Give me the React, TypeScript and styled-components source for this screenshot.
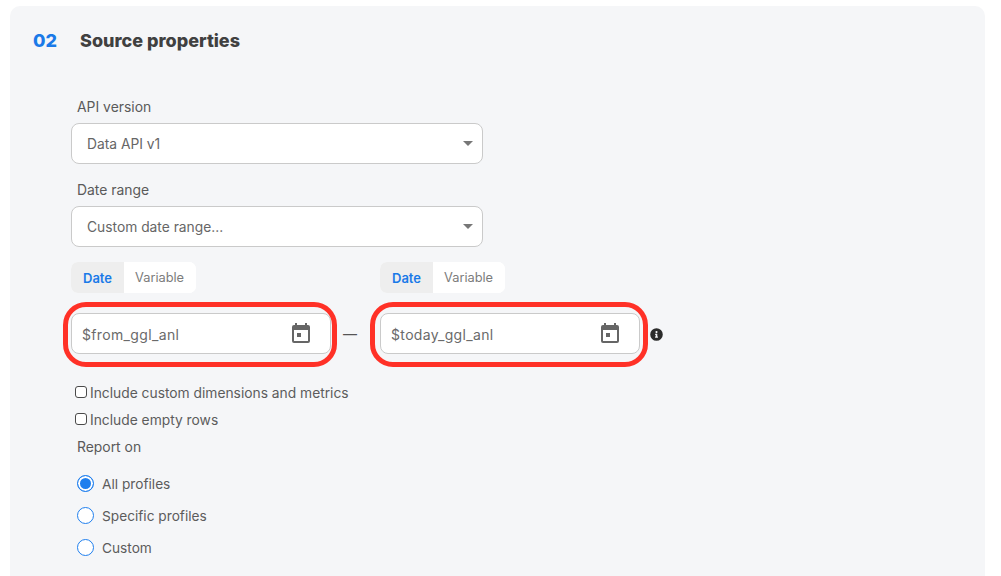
import React from 'react';
import styled, { createGlobalStyle } from 'styled-components';

const GlobalStyle = createGlobalStyle`
  html, body {
    margin: 0;
    padding: 0;
    height: 576px;
    overflow: hidden;
    background: #fff;
    font-family: Inter, "Liberation Sans", sans-serif;
  }
`;

const Panel = styled.section`
  margin: 6px 16px 0 10px;
  height: 570px;
  box-sizing: border-box;
  padding: 0 23px;
  background: #f5f6f8;
  border-radius: 10px 10px 0 0;
`;

const Header = styled.header`
  display: flex;
  align-items: center;
  height: 69px;
  font-size: 18px;
  font-weight: 800;
`;

const StepNumber = styled.span`
  width: 47px;
  color: #1a7ae8;
`;

const Title = styled.h2`
  margin: 0;
  font: inherit;
  color: #404040;
`;

const Form = styled.div`
  display: flex;
  flex-direction: column;
  align-items: flex-start;
  padding: 23px 0 0 38px;
`;

const Label = styled.label`
  display: block;
  height: 17px;
  margin: 1px 0 7px 6px;
  font-size: 13.9px;
  line-height: 17px;
  color: #5a5a5a;
`;

const Select = styled.div`
  position: relative;
  width: 412px;
  height: 41px;
  box-sizing: border-box;
  margin-bottom: 17px;
  padding-left: 15px;
  display: flex;
  align-items: center;
  background: #fff;
  border: 1px solid #cacaca;
  border-radius: 8px;
  font-size: 13.8px;
  color: #666;

  &::after {
    content: '';
    position: absolute;
    right: 9px;
    top: 17px;
    border-style: solid;
    border-width: 5px 5px 0;
    border-color: #777 transparent transparent;
  }
`;

const DateRow = styled.div`
  display: flex;
  align-items: flex-end;
`;

const DateField = styled.div`
  width: 260px;
`;

const Toggle = styled.div`
  display: inline-flex;
  height: 31px;
  margin: -2px 0 20px;
  background: #fff;
  border-radius: 7px;
  overflow: hidden;
  font-size: 13px;
`;

const ToggleItem = styled.span<{ $active?: boolean }>`
  display: flex;
  align-items: center;
  padding: ${p => (p.$active ? '0 12px' : '0 12px 0 11px')};
  background: ${p => (p.$active ? '#eeeeee' : '#fff')};
  color: ${p => (p.$active ? '#1a7ae8' : '#7c7c7c')};
  font-weight: ${p => (p.$active ? 600 : 400)};
  font-size: ${p => (p.$active ? '13px' : '12.8px')};
`;

const DateInput = styled.div<{ $wide?: boolean }>`
  position: relative;
  height: 41px;
  box-sizing: border-box;
  padding: 1px 20px 0 10px;
  display: flex;
  align-items: center;
  justify-content: space-between;
  background: #fff;
  border: 1px solid #cacaca;
  border-radius: 8px;
  font-size: 14px;
  letter-spacing: 0.35px;
  color: #6a6a6a;

  &::before {
    content: '';
    position: absolute;
    left: ${p => (p.$wide ? '-11px' : '-9px')};
    right: ${p => (p.$wide ? '-9px' : '-7px')};
    top: -12px;
    bottom: -14px;
    border: 5px solid #ff3127;
    border-radius: 23px;
  }

  svg {
    margin-top: -3px;
  }
`;

const Dash = styled.span`
  width: 49px;
  height: 41px;
  box-sizing: border-box;
  padding-left: 12px;
  display: flex;
  align-items: center;
  font-size: 14px;
  color: #555;
`;

const InfoIcon = styled.svg`
  width: 13px;
  height: 13px;
  margin: 0 0 13px 10px;
`;

const CheckRow = styled.label`
  display: flex;
  align-items: center;
  height: 17px;
  margin: 0 0 10px 4px;
  font-size: 13.8px;
  color: #5c5c5c;
`;

const CheckBox = styled.span`
  width: 12px;
  height: 12px;
  box-sizing: border-box;
  margin: -2px 3px 0 0;
  background: #fff;
  border: 1.2px solid #4a4a4a;
  border-radius: 3px;
`;

const Checks = styled.div`
  margin-top: 30px;
`;

const Radios = styled.div`
  display: flex;
  flex-direction: column;
  gap: 15px;
  margin: 12px 0 0 6px;
`;

const RadioRow = styled.label`
  display: flex;
  align-items: center;
  height: 17px;
  font-size: 13.7px;
  color: #5c5c5c;
`;

const RadioMark = styled.span<{ $checked?: boolean }>`
  width: 17px;
  height: 17px;
  box-sizing: border-box;
  margin-right: 8px;
  border: 1.4px solid #1f7fee;
  border-radius: 50%;
  background: ${p => (p.$checked ? '#1f7fee' : '#fff')};
  box-shadow: ${p => (p.$checked ? 'inset 0 0 0 2px #fff' : 'none')};
`;

const CalendarIcon = () => (
  <svg width="18" height="20" viewBox="0 0 18 20" fill="#666">
    <path d="M3 0h2v2h8V0h2v2h1a2 2 0 0 1 2 2v14a2 2 0 0 1-2 2H2a2 2 0 0 1-2-2V4a2 2 0 0 1 2-2h1V0zM2 7v11h14V7H2z" />
    <rect x="5" y="10" width="4" height="4" />
  </svg>
);

const DatePicker = ({ value, wide }: { value: string; wide?: boolean }) => (
  <DateField>
    <Toggle>
      <ToggleItem $active>Date</ToggleItem>
      <ToggleItem>Variable</ToggleItem>
    </Toggle>
    <DateInput $wide={wide}>
      <span>{value}</span>
      <CalendarIcon />
    </DateInput>
  </DateField>
);

const App: React.FC = () => {
  return (
    <>
      <GlobalStyle />
      <Panel>
        <Header>
          <StepNumber>02</StepNumber>
          <Title>Source properties</Title>
        </Header>
        <Form>
          <Label>API version</Label>
          <Select>Data API v1</Select>
          <Label>Date range</Label>
          <Select>Custom date range...</Select>
          <DateRow>
            <DatePicker value="$from_ggl_anl" />
            <Dash>—</Dash>
            <DatePicker value="$today_ggl_anl" wide />
            <InfoIcon viewBox="0 0 512 512" fill="#2b2b2b">
              <path d="M256 8a248 248 0 1 0 0 496 248 248 0 0 0 0-496zm0 110a42 42 0 1 1 0 84 42 42 0 0 1 0-84zm56 254c0 7-5 12-12 12h-88c-7 0-12-5-12-12v-24c0-7 5-12 12-12h12v-64h-12c-7 0-12-5-12-12v-24c0-7 5-12 12-12h64c7 0 12 5 12 12v100h12c7 0 12 5 12 12v24z" />
            </InfoIcon>
          </DateRow>
          <Checks>
            <CheckRow><CheckBox />Include custom dimensions and metrics</CheckRow>
            <CheckRow><CheckBox />Include empty rows</CheckRow>
          </Checks>
          <Label>Report on</Label>
          <Radios>
            <RadioRow><RadioMark $checked />All profiles</RadioRow>
            <RadioRow><RadioMark />Specific profiles</RadioRow>
            <RadioRow><RadioMark />Custom</RadioRow>
          </Radios>
        </Form>
      </Panel>
    </>
  );
};

export default App;
